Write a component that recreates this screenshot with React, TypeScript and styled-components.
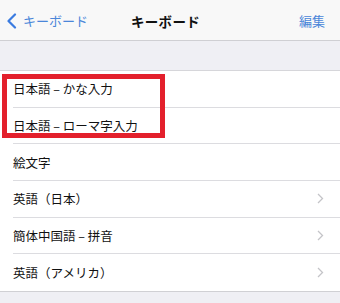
import React from "react";
import styled, { createGlobalStyle } from "styled-components";

const GlobalStyle = createGlobalStyle`
  html, body {
    margin: 0;
    padding: 0;
    background: #efeff4;
    font-family: "Noto Sans CJK JP", "Noto Sans", sans-serif;
  }
`;

const Screen = styled.div`
  width: 340px;
  height: 303px;
  background: #efeff4;
  overflow: hidden;
  position: relative;
`;

const NavBar = styled.div`
  height: 39px;
  background: #f8f8f8;
  border-bottom: 1px solid #cfcfd3;
  display: grid;
  grid-template-columns: 1fr auto 1fr;
  align-items: center;
  padding: 1px 15px 0 6px;
`;

const BackButton = styled.div`
  display: flex;
  align-items: center;
  gap: 6px;
  color: #4a86d9;
  font-size: 13px;
`;

const Title = styled.div`
  font-size: 13.5px;
  font-weight: 700;
  color: #111;
  letter-spacing: 0.3px;
`;

const EditButton = styled.div`
  justify-self: end;
  color: #4a86d9;
  font-size: 13px;
`;

const List = styled.div`
  margin-top: 29px;
  background: #fff;
  border-top: 1px solid #d6d6da;
  border-bottom: 1px solid #d0d0d4;
  padding-left: 13px;
  position: relative;
`;

const Row = styled.div<{ $last?: boolean }>`
  height: 36.67px;
  box-sizing: border-box;
  display: flex;
  align-items: center;
  justify-content: space-between;
  padding-right: 16px;
  border-bottom: ${(p) => (p.$last ? "none" : "1px solid #dcdce0")};
  font-size: 12.5px;
  color: #111;
`;

const Highlight = styled.div`
  position: absolute;
  left: 2px;
  top: 3px;
  width: 163px;
  height: 64px;
  box-sizing: border-box;
  border: 5px solid #e3202c;
  pointer-events: none;
`;

const Chevron = () => (
  <svg width="7" height="11" viewBox="0 0 7 11">
    <path d="M1 1l4.5 4.5L1 10" fill="none" stroke="#c4c4c8" strokeWidth="1.3" />
  </svg>
);

const BackChevron = () => (
  <svg width="11" height="16" viewBox="0 0 11 16">
    <path d="M9 1.5L2.5 8 9 14.5" fill="none" stroke="#3a7be0" strokeWidth="2.2" strokeLinecap="round" strokeLinejoin="round" />
  </svg>
);

const rows = [
  { label: "日本語 – かな入力", more: false },
  { label: "日本語 – ローマ字入力", more: false },
  { label: "絵文字", more: false },
  { label: "英語（日本）", more: true },
  { label: "簡体中国語 – 拼音", more: true },
  { label: "英語（アメリカ）", more: true },
];

export default function App() {
  return (
    <Screen>
      <GlobalStyle />
      <NavBar>
        <BackButton>
          <BackChevron />
          キーボード
        </BackButton>
        <Title>キーボード</Title>
        <EditButton>編集</EditButton>
      </NavBar>
      <List>
        {rows.map((r, i) => (
          <Row key={r.label} $last={i === rows.length - 1}>
            <span>{r.label}</span>
            {r.more && <Chevron />}
          </Row>
        ))}
        <Highlight />
      </List>
    </Screen>
  );
}
